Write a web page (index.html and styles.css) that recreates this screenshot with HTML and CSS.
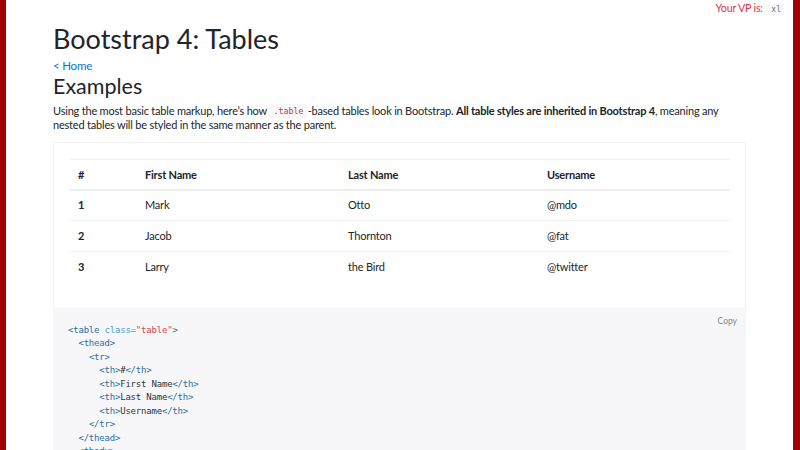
FILE: index.html
```html
<!DOCTYPE html>
<html lang="en">
<head>
    <meta charset="UTF-8">
    <meta name="viewport" content="width=device-width, initial-scale=1.0">
    <title>Bootstrap 4: Tables</title>
    <link rel="stylesheet" href="styles.css">
</head>
<body>
    <div class="vp">Your VP is: <code>xl</code></div>

    <div class="container">
        <h1>Bootstrap 4: Tables</h1>
        <a href="#" class="home">&lt; Home</a>
        <h2>Examples</h2>
        <p class="lead-text">Using the most basic table markup, here’s how <code>.table</code>-based tables look in Bootstrap. <strong>All table styles are inherited in Bootstrap 4</strong>, meaning any nested tables will be styled in the same manner as the parent.</p>

        <div class="example">
            <table class="table">
                <thead>
                    <tr>
                        <th class="col-num">#</th>
                        <th class="col-first">First Name</th>
                        <th class="col-last">Last Name</th>
                        <th>Username</th>
                    </tr>
                </thead>
                <tbody>
                    <tr>
                        <th>1</th>
                        <td>Mark</td>
                        <td>Otto</td>
                        <td>@mdo</td>
                    </tr>
                    <tr>
                        <th>2</th>
                        <td>Jacob</td>
                        <td>Thornton</td>
                        <td>@fat</td>
                    </tr>
                    <tr>
                        <th>3</th>
                        <td>Larry</td>
                        <td>the Bird</td>
                        <td>@twitter</td>
                    </tr>
                </tbody>
            </table>
        </div>

        <div class="highlight">
            <button class="btn-copy">Copy</button>
<pre><span class="nt">&lt;table</span> <span class="na">class=</span><span class="s">"table"</span><span class="nt">&gt;</span>
  <span class="nt">&lt;thead&gt;</span>
    <span class="nt">&lt;tr&gt;</span>
      <span class="nt">&lt;th&gt;</span>#<span class="nt">&lt;/th&gt;</span>
      <span class="nt">&lt;th&gt;</span>First Name<span class="nt">&lt;/th&gt;</span>
      <span class="nt">&lt;th&gt;</span>Last Name<span class="nt">&lt;/th&gt;</span>
      <span class="nt">&lt;th&gt;</span>Username<span class="nt">&lt;/th&gt;</span>
    <span class="nt">&lt;/tr&gt;</span>
  <span class="nt">&lt;/thead&gt;</span>
  <span class="nt">&lt;tbody&gt;</span></pre>
        </div>
    </div>
</body>
</html>
```

FILE: styles.css
```css
* {
    box-sizing: border-box;
}

html, body {
    margin: 0;
    padding: 0;
}

body {
    font-family: 'Lato', 'Liberation Sans', sans-serif;
    font-size: 11px;
    letter-spacing: -0.2px;
    line-height: 15px;
    color: #212529;
    background: #fff;
    border-left: 6px solid #a00000;
    border-right: 7px solid #a00000;
    min-height: 100vh;
    position: relative;
    overflow: hidden;
}

code {
    font-family: 'DejaVu Sans Mono', 'Liberation Mono', monospace;
    letter-spacing: 0;
    line-height: 1;
}

/* Badge di pojok kanan atas */
.vp {
    position: absolute;
    top: 0;
    right: 9px;
    color: #dc3545;
    font-size: 10.7px;
    line-height: 15px;
}

.vp code {
    font-size: 8px;
    color: #777;
    background: #f7f7f9;
    padding: 1px 3px;
    margin-left: 3px;
}

.container {
    max-width: 693px;
    margin: 0 auto;
    padding-top: 21px;
}

h1 {
    margin: 0;
    font-size: 27px;
    font-weight: 400;
    letter-spacing: 0;
    line-height: 36px;
    color: #212529;
}

.home {
    display: block;
    color: #0275d8;
    text-decoration: none;
    font-size: 11.5px;
    line-height: 14px;
    margin-top: 2px;
}

h2 {
    margin: 1px 0 6px;
    font-size: 21.5px;
    font-weight: 400;
    letter-spacing: 0;
    line-height: 24px;
}

.lead-text {
    margin: 0 0 10px;
    line-height: 14px;
}

.lead-text code {
    font-size: 8.4px;
    color: #bd4147;
    background: #f7f7f9;
    padding: 2px 3px;
    margin: 0 1px;
    vertical-align: 1px;
}

.lead-text strong {
    font-weight: 700;
}

.example {
    border: 1px solid #f1f1f1;
    border-bottom: 0;
    padding: 16px 16px 24px;
}

.table {
    width: 660px;
    border-collapse: collapse;
    text-align: left;
}

.table th,
.table td {
    padding: 0 8px 1px;
    height: 31px;
    border-top: 1px solid #eceeef;
    vertical-align: middle;
}

.table thead th {
    height: 30px;
    padding: 1px 8px 0;
    border-bottom: 2px solid #eceeef;
    font-weight: 700;
}

.table tbody th {
    font-weight: 700;
}

.col-num { width: 67px; }
.col-first { width: 203px; }
.col-last { width: 199px; }

.highlight {
    position: relative;
    background: #f7f7f9;
    padding: 17px 15px 16px;
}

.btn-copy {
    position: absolute;
    top: 7px;
    right: 5px;
    border: 0;
    background: transparent;
    color: #818a91;
    font-family: 'Lato', sans-serif;
    font-size: 8.5px;
    padding: 2px 4px;
}

.highlight pre {
    margin: 0;
    font-family: 'DejaVu Sans Mono', 'Liberation Mono', monospace;
    font-size: 9px;
    line-height: 13.55px;
    color: #333;
}

.nt { color: #2f6f9f; }
.na { color: #4f9fcf; }
.s { color: #d44950; }
```
